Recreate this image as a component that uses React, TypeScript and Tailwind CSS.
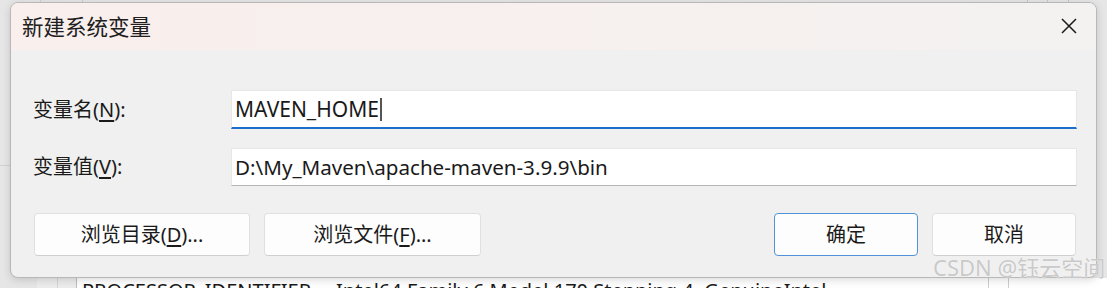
export default function App() {
  const font = { fontFamily: '"Noto Sans", "Noto Sans CJK SC", sans-serif' }
  return (
    <div className="relative h-[288px] w-[1107px] overflow-hidden bg-[#e6e6e6] text-[#1a1a1a]" style={font}>
      {/* Background window (environment variables list) */}
      <div className="absolute inset-0">
        <div className="absolute left-[40px] top-0 h-full w-px bg-[#d0d0d0]" />
        <div className="absolute left-[82px] top-0 h-[4px] w-px bg-[#cfcfcf]" />
        <div className="absolute left-0 top-[165px] h-px w-[10px] bg-[#d2d2d2]" />
        <div className="absolute left-[1027px] top-0 h-[4px] w-px bg-[#c8c8c8]" />
        <div className="absolute left-[1047px] top-0 h-[4px] w-px bg-[#c8c8c8]" />
        <div className="absolute left-[1068px] top-0 h-[4px] w-px bg-[#c8c8c8]" />
        <div className="absolute left-[37px] top-[278px] flex h-[10px] w-[1070px] bg-[#ececec]">
          <div className="w-[21px] border-r border-[#d4d4d4]" />
          <div className="w-[19px] border-r border-[#bdbdbd]" />
          <div className="relative flex-1 bg-white">
            <div className="absolute left-[5px] top-[3px] flex whitespace-nowrap text-[20px] leading-none">
              <span className="w-[254px]">PROCESSOR_IDENTIFIER</span>
              <span>Intel64 Family 6 Model 170 Stepping 4, GenuineIntel</span>
            </div>
            <div className="absolute left-[911px] top-0 h-full w-px bg-[#cfcfcf]" />
            <div className="absolute left-[931px] top-0 h-full w-px bg-[#cfcfcf]" />
          </div>
        </div>
      </div>

      {/* Dialog */}
      <div className="absolute left-[10px] top-[2px] flex h-[276px] w-[1087px] flex-col overflow-hidden rounded-[8px] border border-[#b8b8b8] bg-[#f0f0f0] shadow-[0_2px_8px_rgba(0,0,0,0.15)]">
        <div className="flex h-[47px] shrink-0 items-center justify-between bg-gradient-to-r from-[#f9efed] via-[#f7f0ee] to-[#f3f2f1] pl-[11px] pr-[19px]">
          <span className="text-[21.5px] leading-none text-[#202020]">新建系统变量</span>
          <svg width="16" height="16" viewBox="0 0 16 16" className="mt-[-1px]">
            <path d="M1 1L15 15M15 1L1 15" stroke="#1a1a1a" strokeWidth="1.5" fill="none" />
          </svg>
        </div>

        <div className="flex flex-1 flex-col pl-[22px] pr-[19px] pt-[40px]">
          <div className="flex h-[39px] items-center">
            <label className="w-[198px] text-[20px] leading-none">
              变量名(<span className="underline underline-offset-[3px]">N</span>):
            </label>
            <div className="flex h-full flex-1 items-center border border-b-2 border-[#e6e6e6] border-b-[#1a6fcc] bg-white pl-[3px]">
              <span className="text-[21px] leading-none">MAVEN_HOME</span>
              <span className="ml-[1px] h-[23px] w-[2px] bg-[#555555]" />
            </div>
          </div>

          <div className="mt-[19px] flex h-[38px] items-center">
            <label className="w-[198px] text-[20px] leading-none">
              变量值(<span className="underline underline-offset-[3px]">V</span>):
            </label>
            <div className="flex h-full flex-1 items-center border border-[#e6e6e6] border-b-[#b5b5b5] bg-white pl-[3px]">
              <span className="text-[20.6px] leading-none">D:\My_Maven\apache-maven-3.9.9\bin</span>
            </div>
          </div>

          <div className="mt-[27px] flex h-[43px]">
            <button className="ml-[1px] w-[216px] rounded-[4px] border border-[#e0e0e0] border-b-[#cfcfcf] bg-[#fdfdfd] text-[20px]">
              浏览目录(<span className="underline underline-offset-[3px]">D</span>)...
            </button>
            <button className="ml-[14px] w-[217px] rounded-[4px] border border-[#e0e0e0] border-b-[#cfcfcf] bg-[#fdfdfd] text-[20px]">
              浏览文件(<span className="underline underline-offset-[3px]">F</span>)...
            </button>
            <div className="flex-1" />
            <button className="w-[144px] rounded-[4px] border border-[#4f93d8] bg-[#fdfdfd] text-[20px]">确定</button>
            <button className="ml-[14px] mr-[1px] w-[144px] rounded-[4px] border border-[#e0e0e0] border-b-[#cfcfcf] bg-[#fdfdfd] text-[20px]">
              取消
            </button>
          </div>
        </div>
      </div>

      {/* Watermark */}
      <div className="absolute left-[933px] top-[256px] whitespace-nowrap text-[22px] leading-none text-[#c9c9c9] [text-shadow:0_0_1px_#ffffff]">
        CSDN @钰云空间
      </div>
    </div>
  )
}
